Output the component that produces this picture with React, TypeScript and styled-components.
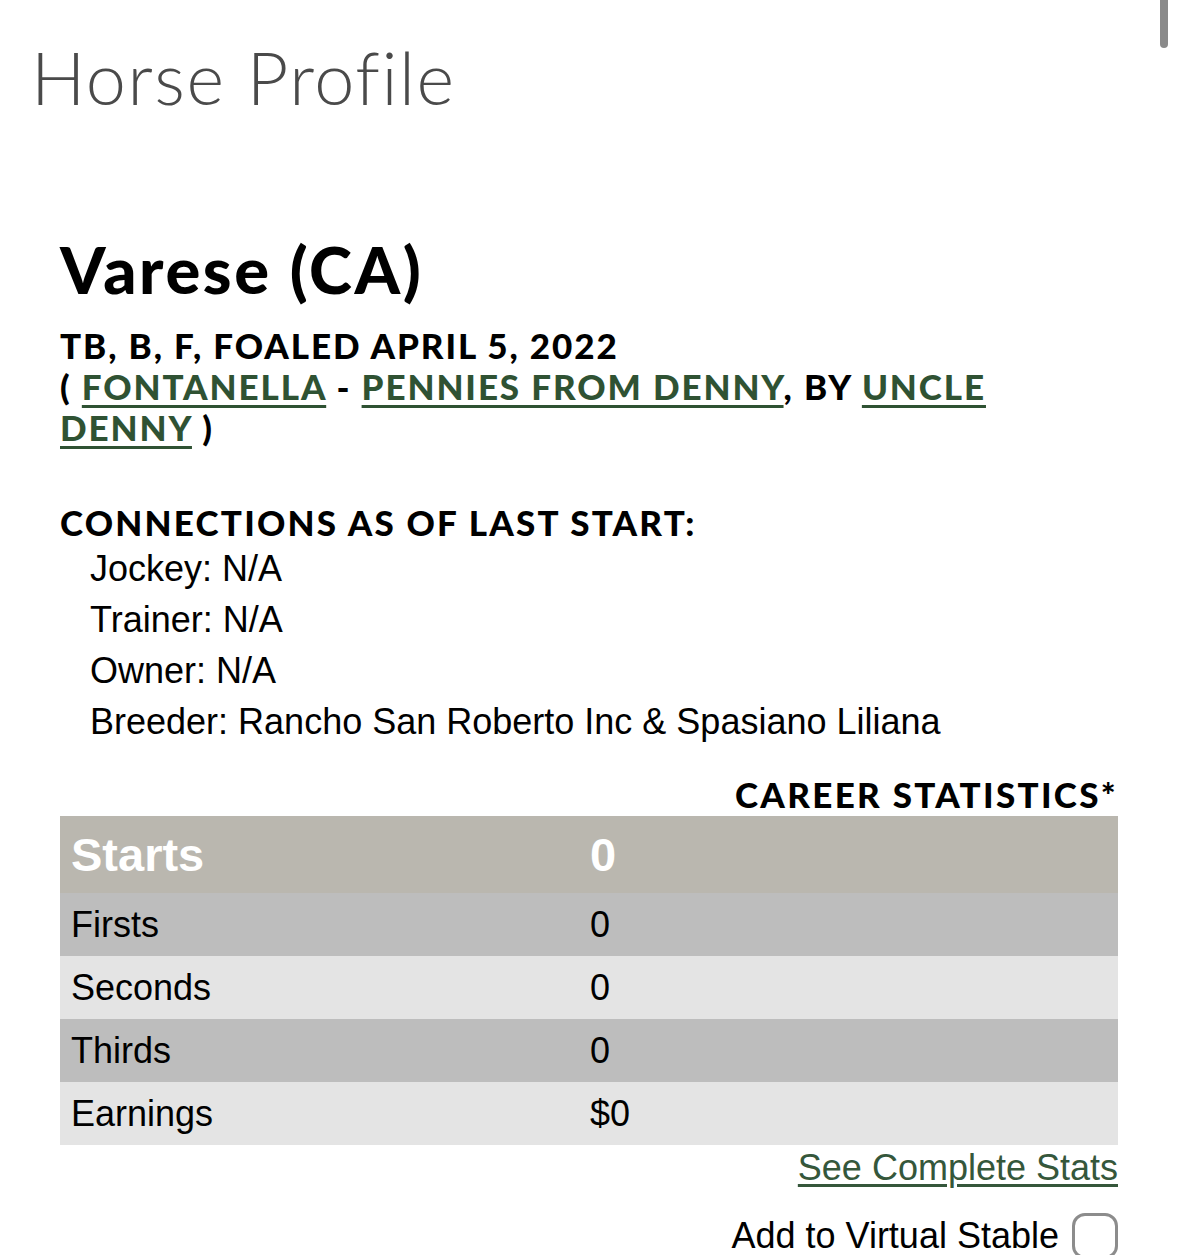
import styled, { createGlobalStyle } from "styled-components";

const GlobalStyle = createGlobalStyle`
  html, body {
    margin: 0;
    padding: 0;
    background: #ffffff;
  }
  body {
    font-family: "Liberation Sans", Arial, sans-serif;
    color: #000000;
  }
`;

const Page = styled.div`
  position: relative;
  width: 1179px;
  min-height: 1255px;
  overflow: hidden;
`;

const ScrollThumb = styled.div`
  position: absolute;
  top: 0;
  right: 11px;
  width: 8px;
  height: 48px;
  border-radius: 0 0 4px 4px;
  background: #8a8a8a;
`;

const PageTitle = styled.h1`
  margin: 0;
  padding: 35px 0 0 31px;
  font-family: "Lato", "Open Sans", sans-serif;
  font-weight: 300;
  font-size: 72px;
  line-height: 84px;
  letter-spacing: 1.6px;
  color: #4a4a4a;
`;

const Profile = styled.section`
  padding: 112px 61px 0 60px;
`;

const HorseName = styled.h2`
  margin: 0;
  font-family: "Lato", sans-serif;
  font-weight: 900;
  font-size: 65px;
  line-height: 76px;
  letter-spacing: 2.6px;
`;

const Details = styled.div`
  margin-top: 18px;
  font-family: "Lato", sans-serif;
  font-weight: 900;
  font-size: 35px;
  line-height: 41px;
  letter-spacing: 1.9px;
  text-transform: uppercase;
`;

const Pedigree = styled.a`
  color: #2f5233;
  text-decoration: underline;
  text-decoration-thickness: 3px;
  text-underline-offset: 5px;
`;

const SectionHead = styled.h3`
  margin: 53px 0 0;
  font-family: "Lato", sans-serif;
  font-weight: 900;
  font-size: 35px;
  line-height: 42px;
  letter-spacing: 2.2px;
`;

const ConnectionList = styled.ul`
  list-style: none;
  margin: 0;
  padding: 0 0 0 30px;
  font-size: 36px;
  line-height: 51px;
`;

const StatsHead = styled.h3`
  margin: 25px 0 0;
  text-align: right;
  font-family: "Lato", sans-serif;
  font-weight: 900;
  font-size: 35px;
  line-height: 44px;
  letter-spacing: 2.3px;
`;

const StatsTable = styled.table`
  width: 100%;
  border-collapse: collapse;
`;

type Tone = "head" | "dark" | "light";

const Row = styled.tr<{ $tone: Tone }>`
  background: ${(p) =>
    p.$tone === "head" ? "#bab7af" : p.$tone === "dark" ? "#bdbdbd" : "#e4e4e4"};
  height: ${(p) => (p.$tone === "head" ? "77px" : "63px")};
  color: ${(p) => (p.$tone === "head" ? "#ffffff" : "#000000")};
  font-size: ${(p) => (p.$tone === "head" ? "47px" : "36px")};
  font-weight: ${(p) => (p.$tone === "head" ? 700 : 400)};
`;

const Cell = styled.td`
  padding: 0 11px;
  vertical-align: middle;
  &:first-child {
    width: 497px;
  }
`;

const Footer = styled.div`
  display: flex;
  flex-direction: column;
  align-items: flex-end;
  font-size: 36px;
`;

const StatsLink = styled.a`
  margin-top: 2px;
  color: #35573b;
  text-decoration: underline;
  text-underline-offset: 4px;
`;

const StableRow = styled.label`
  display: flex;
  align-items: center;
  gap: 13px;
  margin-top: 24px;
`;

const Check = styled.span`
  width: 46px;
  height: 46px;
  box-sizing: border-box;
  border: 3px solid #8c8c8c;
  border-radius: 13px;
  background: #ffffff;
`;

const connections = [
  ["Jockey", "N/A"],
  ["Trainer", "N/A"],
  ["Owner", "N/A"],
  ["Breeder", "Rancho San Roberto Inc & Spasiano Liliana"],
];

const stats: { label: string; value: string; tone: Tone }[] = [
  { label: "Starts", value: "0", tone: "head" },
  { label: "Firsts", value: "0", tone: "dark" },
  { label: "Seconds", value: "0", tone: "light" },
  { label: "Thirds", value: "0", tone: "dark" },
  { label: "Earnings", value: "$0", tone: "light" },
];

export default function App() {
  return (
    <Page>
      <GlobalStyle />
      <ScrollThumb />
      <PageTitle>Horse Profile</PageTitle>
      <Profile>
        <HorseName>Varese (CA)</HorseName>
        <Details>
          TB, B, F, Foaled April 5, 2022
          <br />( <Pedigree href="#">Fontanella</Pedigree> -{" "}
          <Pedigree href="#">Pennies From Denny</Pedigree>, By{" "}
          <Pedigree href="#">Uncle Denny</Pedigree> )
        </Details>
        <SectionHead>CONNECTIONS AS OF LAST START:</SectionHead>
        <ConnectionList>
          {connections.map(([k, v]) => (
            <li key={k}>
              {k}: {v}
            </li>
          ))}
        </ConnectionList>
        <StatsHead>CAREER STATISTICS*</StatsHead>
        <StatsTable>
          <tbody>
            {stats.map((s) => (
              <Row key={s.label} $tone={s.tone}>
                <Cell>{s.label}</Cell>
                <Cell>{s.value}</Cell>
              </Row>
            ))}
          </tbody>
        </StatsTable>
        <Footer>
          <StatsLink href="#">See Complete Stats</StatsLink>
          <StableRow>
            Add to Virtual Stable <Check />
          </StableRow>
        </Footer>
      </Profile>
    </Page>
  );
}
